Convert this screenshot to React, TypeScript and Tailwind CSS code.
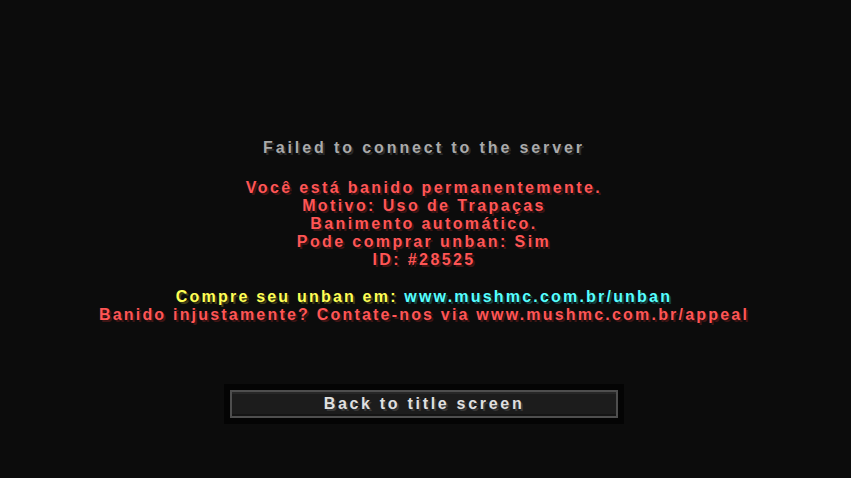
const mc = "font-['Liberation_Sans',Arial,sans-serif] font-bold text-[16px] leading-[18px] whitespace-nowrap";

const red = "text-[#ff5555] [text-shadow:2px_2px_0_#3f1515]";

export default function App() {
  return (
    <div className="w-[851px] h-[478px] bg-[#0c0c0c] overflow-hidden">
      <div className="w-[848px] flex flex-col items-center pt-[139px]">
        <p className={`${mc} tracking-[2.9px] text-[#aaaaaa] [text-shadow:2px_2px_0_#2a2a2a]`}>
          Failed to connect to the server
        </p>

        <div className={`${mc} tracking-[2.4px] ${red} mt-[22px] flex flex-col items-center`}>
          <p>Você está banido permanentemente.</p>
          <p>Motivo: Uso de Trapaças</p>
          <p>Banimento automático.</p>
          <p>Pode comprar unban: Sim</p>
          <p>ID: #28525</p>
        </div>

        <div className={`${mc} tracking-[2.2px] mt-[19px] flex flex-col items-center`}>
          <p>
            <span className="text-[#ffff55] [text-shadow:2px_2px_0_#3f3f15]">Compre seu unban em: </span>
            <span className="text-[#55ffff] [text-shadow:2px_2px_0_#153f3f]">www.mushmc.com.br/unban</span>
          </p>
          <p className={red}>Banido injustamente? Contate-nos via www.mushmc.com.br/appeal</p>
        </div>

        <div className="mt-[60px] w-[400px] h-[40px] bg-[#040404] p-[6px]">
          <button className="w-full h-full border-2 border-[#4e4e4e] bg-[#1c1c1c] shadow-[inset_0_2px_0_#272727,inset_0_-2px_0_#141414] flex items-center justify-center">
            <span className={`${mc} tracking-[2.7px] text-[#e0e0e0] [text-shadow:2px_2px_0_#383838]`}>Back to title screen</span>
          </button>
        </div>
      </div>
    </div>
  );
}
